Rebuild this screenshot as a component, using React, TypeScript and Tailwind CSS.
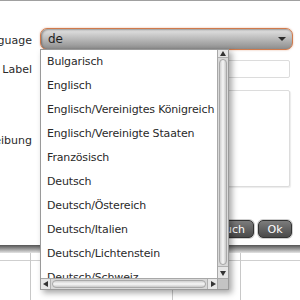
const languages = [
  'Bulgarisch',
  'Englisch',
  'Englisch/Vereinigtes Königreich',
  'Englisch/Vereinigte Staaten',
  'Französisch',
  'Deutsch',
  'Deutsch/Östereich',
  'Deutsch/Italien',
  'Deutsch/Lichtenstein',
  'Deutsch/Schweiz',
];

function Triangle({ dir }: { dir: 'up' | 'down' | 'left' | 'right' }) {
  const points = {
    up: '1,6 4,1 7,6',
    down: '1,2 7,2 4,7',
    left: '6,1 6,7 1,4',
    right: '2,1 2,7 7,4',
  }[dir];
  return (
    <svg width="8" height="8" viewBox="0 0 8 8">
      <polygon points={points} fill="#333" />
    </svg>
  );
}

function Dropdown() {
  return (
    <div className="absolute left-[40px] top-[49px] w-[189px] h-[241px] bg-white border border-[#9a9a9a] shadow-[3px_3px_6px_rgba(0,0,0,0.35)] flex flex-col">
      <div className="flex flex-1 min-h-0">
        {/* list */}
        <div className="flex-1 overflow-hidden">
          {languages.map((lang) => (
            <div key={lang} className="h-[24px] flex items-center pl-[6px] whitespace-nowrap text-[11px] tracking-[-0.15px] text-[#2a2a2a]">
              {lang}
            </div>
          ))}
        </div>
        {/* vertical scrollbar */}
        <div className="w-[11px] bg-[#d8d8d8] border-l border-[#a8a8a8] flex flex-col">
          <div className="h-[8px] flex items-center justify-center bg-[#e6e6e6] border-b border-[#b0b0b0]">
            <Triangle dir="up" />
          </div>
          <div className="flex-1 p-[1px] flex">
            <div className="flex-1 rounded-full bg-gradient-to-r from-[#d0d0d0] via-[#f6f6f6] to-[#c8c8c8] border border-[#a8a8a8]" />
          </div>
          <div className="h-[12px] flex items-center justify-center bg-[#e6e6e6] border-t border-[#b0b0b0]">
            <Triangle dir="down" />
          </div>
        </div>
      </div>
      {/* horizontal scrollbar */}
      <div className="h-[11px] flex border-t border-[#a8a8a8] bg-[#d8d8d8]">
        <div className="w-[10px] flex items-center justify-center bg-[#e6e6e6] border-r border-[#b0b0b0]">
          <Triangle dir="left" />
        </div>
        <div className="flex-1 p-[1px] flex">
          <div className="flex-1 rounded-full bg-gradient-to-b from-[#d0d0d0] via-[#f6f6f6] to-[#c8c8c8] border border-[#a8a8a8]" />
        </div>
        <div className="w-[10px] flex items-center justify-center bg-[#e6e6e6] border-l border-[#b0b0b0]">
          <Triangle dir="right" />
        </div>
        <div className="w-[11px] bg-[#c4c4c4] border-l border-[#a8a8a8]" />
      </div>
    </div>
  );
}

export default function App() {
  return (
    <div className="relative w-[300px] h-[300px] overflow-hidden bg-white font-['DejaVu_Sans',sans-serif] text-[11px] text-[#2a2a2a]">
      <div className="h-px bg-[#a0a0a0]" />

      {/* Dialog */}
      <div className="h-[244px] flex flex-col pt-[27px]">
        <div className="flex items-center h-[22px]">
          <div className="w-[32px] pt-[4px] overflow-hidden flex justify-end whitespace-nowrap">Language</div>
          <div className="ml-[8px] w-[253px] h-[22px] rounded-[7px] border-[1.5px] border-[#d07a4c] bg-gradient-to-b from-[#e6e6e6] to-[#8e8e8e] shadow-[inset_1px_1px_2px_rgba(0,0,0,0.35),0_0_2px_rgba(208,122,76,0.6)] flex items-center justify-between pl-[7px] pr-[6px]">
            <span className="text-[12px] text-[#1e1e1e]">de</span>
            <svg width="8" height="6" viewBox="0 0 8 6">
              <polygon points="0,1 8,1 4,5" fill="#2a2a2a" />
            </svg>
          </div>
        </div>

        <div className="flex items-center h-[18px] mt-[10px]">
          <div className="w-[32px] pt-[3px] overflow-hidden flex justify-end whitespace-nowrap">Label</div>
          <div className="ml-[8px] w-[250px] h-[18px] rounded-[2px] border border-[#dcdcdc] bg-white" />
        </div>

        <div className="flex items-center h-[97px] mt-[12px]">
          <div className="w-[32px] pt-[6px] overflow-hidden flex justify-end whitespace-nowrap">Beschreibung</div>
          <div className="ml-[8px] w-[250px] h-[97px] rounded-[2px] border border-[#dcdcdc] bg-white shadow-[1px_1px_1px_rgba(0,0,0,0.08)]" />
        </div>

        <div className="flex justify-end gap-[4px] mt-[33px] pr-[8px]">
          <button className="h-[18px] px-[8px] rounded-[5px] border border-[#333] bg-gradient-to-b from-[#7c7c7c] to-[#4a4a4a] text-white text-[11px] leading-none shadow-[0_0_0_1px_#cfcfcf]">
            Abbruch
          </button>
          <button className="h-[18px] w-[34px] rounded-[5px] border border-[#333] bg-gradient-to-b from-[#7c7c7c] to-[#4a4a4a] text-white text-[11px] leading-none shadow-[0_0_0_1px_#cfcfcf]">
            Ok
          </button>
        </div>
      </div>

      {/* dialog shadow */}
      <div className="h-[8px] bg-gradient-to-b from-[#555] to-[#e4e4e4]" />

      {/* grid behind */}
      <div className="relative h-[47px] bg-white">
        <div className="h-[8px] border-b border-[#cfcfcf]" />
        <div className="absolute left-[30px] top-0 bottom-0 w-px bg-[#c8c8c8]" />
        <div className="absolute left-[172px] top-0 bottom-0 w-px bg-[#c8c8c8]" />
        <div className="absolute left-[240px] top-0 bottom-0 w-px bg-[#c8c8c8]" />
      </div>

      <Dropdown />
    </div>
  );
}
